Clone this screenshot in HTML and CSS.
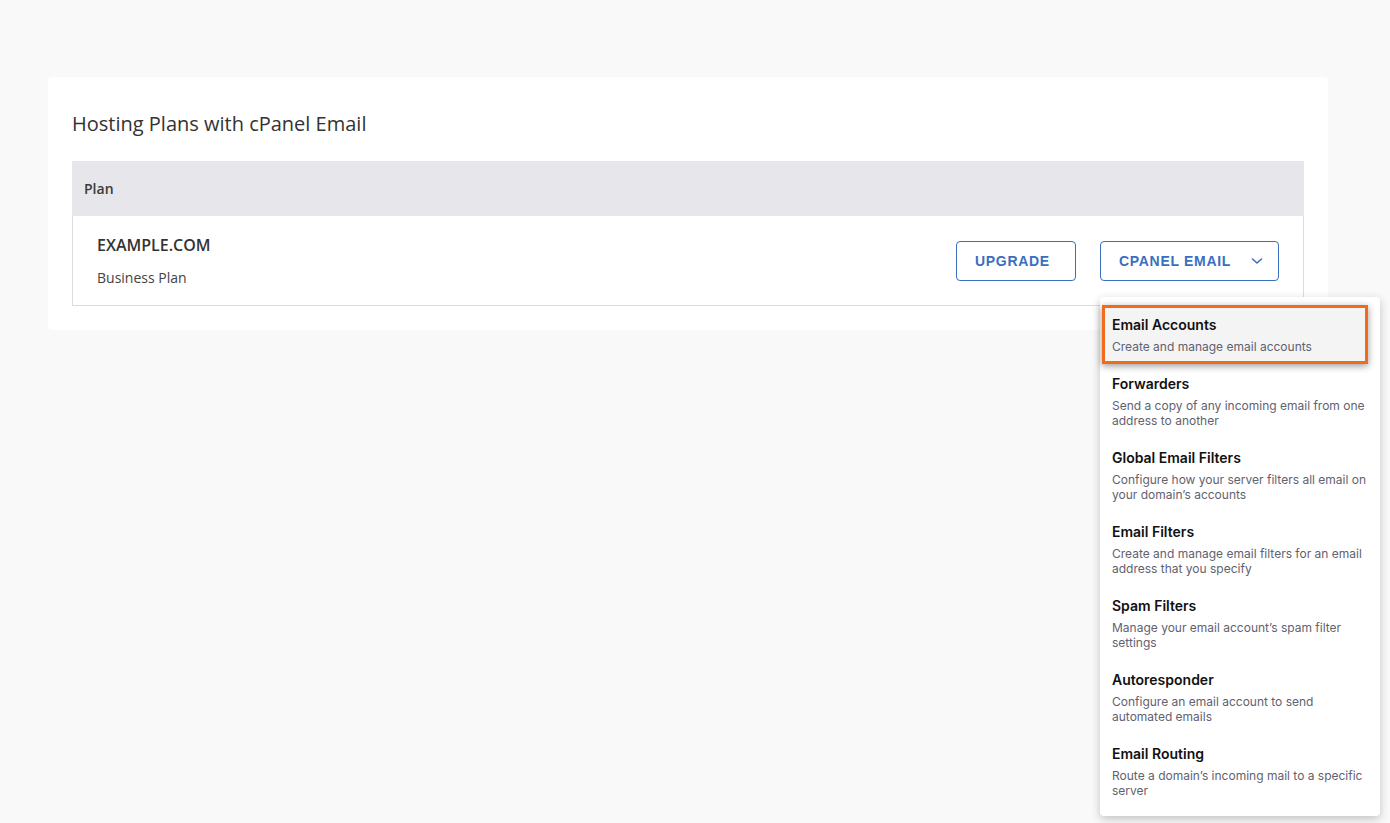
FILE: index.html
```html
<!DOCTYPE html>
<html lang="en">
<head>
    <meta charset="UTF-8">
    <meta name="viewport" content="width=device-width, initial-scale=1.0">
    <title>Hosting Plans with cPanel Email</title>
    <link rel="stylesheet" href="styles.css">
</head>
<body>
    <div class="page">
        <div class="card">
            <h2 class="card-title">Hosting Plans with cPanel Email</h2>

            <div class="plan-table">
                <div class="plan-head">Plan</div>
                <div class="plan-row">
                    <div class="plan-info">
                        <div class="plan-domain">EXAMPLE.COM</div>
                        <div class="plan-name">Business Plan</div>
                    </div>
                    <div class="plan-actions">
                        <button class="btn">UPGRADE</button>
                        <div class="dropdown">
                            <button class="btn btn-toggle">
                                CPANEL EMAIL
                                <svg class="chevron" width="12" height="8" viewBox="0 0 12 8"><path d="M1.5 2 L6 6 L10.5 2" fill="none" stroke="currentColor" stroke-width="1.6" stroke-linecap="round" stroke-linejoin="round"/></svg>
                            </button>
                            <div class="menu">
                                <a class="menu-item active" href="#">
                                    <span class="item-title">Email Accounts</span>
                                    <span class="item-desc">Create and manage email accounts</span>
                                </a>
                                <a class="menu-item" href="#">
                                    <span class="item-title">Forwarders</span>
                                    <span class="item-desc">Send a copy of any incoming email from one address to another</span>
                                </a>
                                <a class="menu-item" href="#">
                                    <span class="item-title">Global Email Filters</span>
                                    <span class="item-desc">Configure how your server filters all email on your domain’s accounts</span>
                                </a>
                                <a class="menu-item" href="#">
                                    <span class="item-title">Email Filters</span>
                                    <span class="item-desc">Create and manage email filters for an email address that you specify</span>
                                </a>
                                <a class="menu-item" href="#">
                                    <span class="item-title">Spam Filters</span>
                                    <span class="item-desc">Manage your email account’s spam filter settings</span>
                                </a>
                                <a class="menu-item" href="#">
                                    <span class="item-title">Autoresponder</span>
                                    <span class="item-desc">Configure an email account to send automated emails</span>
                                </a>
                                <a class="menu-item" href="#">
                                    <span class="item-title">Email Routing</span>
                                    <span class="item-desc">Route a domain’s incoming mail to a specific server</span>
                                </a>
                            </div>
                        </div>
                    </div>
                </div>
            </div>
        </div>
    </div>
</body>
</html>
```

FILE: styles.css
```css
* {
    margin: 0;
    padding: 0;
    box-sizing: border-box;
}

body {
    font-family: "Open Sans", "Liberation Sans", sans-serif;
    background: #f9f9f9;
    color: #333;
    min-height: 100vh;
}

.page {
    padding: 77px 62px 0 48px;
}

.card {
    background: white;
    border-radius: 4px;
    padding: 24px 24px 24px;
}

.card-title {
    font-size: 20px;
    font-weight: 500;
    line-height: 46px;
    color: #333;
    margin-bottom: 14px;
}

.plan-table {
    border: 1px solid #dcdce0;
    border-top: none;
}

.plan-head {
    background: #e7e6eb;
    height: 55px;
    margin: 0 -1px;
    padding: 0 12px;
    display: flex;
    align-items: center;
    font-size: 14px;
    font-weight: 600;
    color: #3a3a3a;
}

.plan-row {
    display: flex;
    align-items: center;
    justify-content: space-between;
    height: 89px;
    padding: 0 24px;
}

.plan-domain {
    font-size: 16px;
    font-weight: 600;
    color: #333;
    line-height: 24px;
    margin-bottom: 11px;
}

.plan-name {
    font-size: 14px;
    color: #444;
    line-height: 20px;
}

.plan-actions {
    display: flex;
    gap: 24px;
}

.btn {
    font-family: "Liberation Sans", Arial, sans-serif;
    height: 40px;
    padding: 0 17px 0 18px;
    background: white;
    border: 1px solid #3a6fc0;
    border-radius: 4px;
    color: #3a6fc0;
    font-size: 14px;
    font-weight: bold;
    letter-spacing: 0.7px;
    cursor: pointer;
    display: flex;
    align-items: center;
    width: 120px;
}

.btn-toggle {
    width: 179px;
}

.chevron {
    margin-left: auto;
    margin-right: -2px;
    color: #3a6fc0;
}

.dropdown {
    position: relative;
}

.menu {
    position: absolute;
    top: 56px;
    left: 0;
    width: 280px;
    background: white;
    border-radius: 4px;
    box-shadow: 0 3px 10px rgba(0, 0, 0, 0.22);
    padding: 8px 0;
    font-family: Inter, "Liberation Sans", sans-serif;
    z-index: 10;
}

.menu-item {
    display: flex;
    flex-direction: column;
    gap: 4px;
    padding: 10px 12px;
    text-decoration: none;
}

.menu-item.active {
    margin: 0 12px 0 2px;
    padding: 7px 7px;
    border: 3px solid #f26a1b;
    background: #f4f4f5;
    box-shadow: 0 2px 7px rgba(0, 0, 0, 0.4);
}

.item-title {
    font-size: 14px;
    font-weight: 600;
    line-height: 20px;
    color: #111;
}

.item-desc {
    font-size: 12px;
    line-height: 15px;
    color: #5f6270;
}
```
